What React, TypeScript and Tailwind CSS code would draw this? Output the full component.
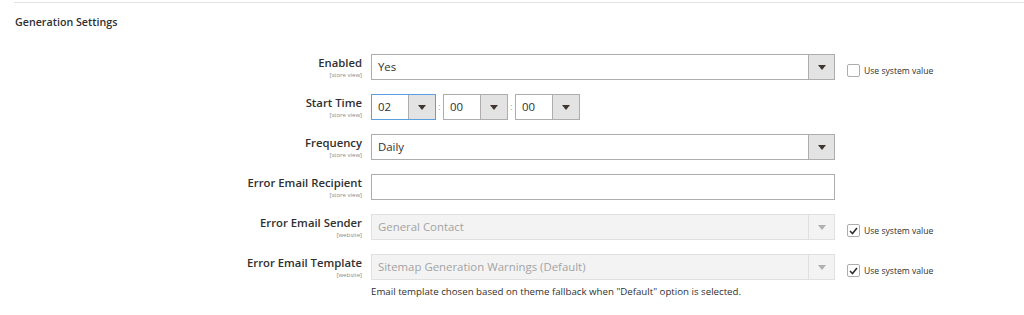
import React from "react";

const Arrow = ({ disabled }: { disabled?: boolean }) => (
  <svg width="8" height="5" viewBox="0 0 8 5">
    <path d="M0 0 L8 0 L4 5 Z" fill={disabled ? "#b0b0b0" : "#41362f"} />
  </svg>
);

const Check = ({ checked }: { checked?: boolean }) => (
  <div className="w-[13px] h-[13px] border border-[#adadad] rounded-[2px] bg-white flex items-center justify-center">
    {checked && (
      <svg width="9" height="8" viewBox="0 0 9 8">
        <path d="M1 4 L3.5 6.5 L8 1" stroke="#303030" strokeWidth="1.6" fill="none" />
      </svg>
    )}
  </div>
);

const Label = ({ title, scope }: { title: string; scope: string }) => (
  <div className="w-[362px] shrink-0 flex flex-col items-end pt-[1px]">
    <div className="text-[11.3px] leading-[15px] font-semibold text-[#303030]">{title}</div>
    <div className="text-[6px] leading-[8px] text-[#8a8a8a] mt-[1px]">{scope}</div>
  </div>
);

const Select = ({ value, disabled }: { value: string; disabled?: boolean }) => (
  <div
    className={`w-[464px] h-[26px] flex border ${
      disabled ? "border-[#e0e0e0] bg-[#f3f3f3]" : "border-[#adadad] bg-white"
    }`}
  >
    <div
      className={`flex-1 flex items-center pl-[6px] text-[11.4px] ${
        disabled ? "text-[#a3a3a3]" : "text-[#303030]"
      }`}
    >
      {value}
    </div>
    <div
      className={`w-[26px] flex items-center justify-center border-l ${
        disabled ? "border-[#e0e0e0] bg-[#f3f3f3]" : "border-[#adadad] bg-[#e3e3e3]"
      }`}
    >
      <Arrow disabled={disabled} />
    </div>
  </div>
);

const TimeSelect = ({ value, focused }: { value: string; focused?: boolean }) => (
  <div
    className={`w-[65px] h-[26px] flex border bg-white ${
      focused ? "border-[#5a9fe0]" : "border-[#adadad]"
    }`}
  >
    <div className="w-[36px] flex items-center pl-[6px] text-[11.4px] text-[#303030]">{value}</div>
    <div className="flex-1 flex items-center justify-center border-l border-[#adadad] bg-[#e3e3e3]">
      <Arrow />
    </div>
  </div>
);

const UseSystem = ({ checked }: { checked?: boolean }) => (
  <div className="flex items-center gap-[4px] ml-[12px] mt-[10px]">
    <Check checked={checked} />
    <span className="text-[8.6px] leading-[12px] text-[#303030]">Use system value</span>
  </div>
);

export default function App() {
  return (
    <div
      className="w-[1024px] h-[315px] bg-white overflow-hidden"
      style={{ fontFamily: '"Open Sans", "Liberation Sans", sans-serif' }}
    >
      <div className="ml-[14px] mt-[2px] border-t-[1.5px] border-[#e3e3e3]" />
      <div className="pl-[15px] pt-[12px] text-[10.7px] leading-[14px] font-semibold text-[#303030]">
        Generation Settings
      </div>
      <div className="mt-[25px] flex flex-col gap-[14px]">
        <div className="flex items-start">
          <Label title="Enabled" scope="[store view]" />
          <div className="ml-[9px] flex items-start">
            <Select value="Yes" />
            <UseSystem />
          </div>
        </div>
        <div className="flex items-start">
          <Label title="Start Time" scope="[store view]" />
          <div className="ml-[9px] flex items-center">
            <TimeSelect value="02" focused />
            <span className="w-[7px] text-center text-[9px] text-[#a0a0a0]">:</span>
            <TimeSelect value="00" />
            <span className="w-[7px] text-center text-[9px] text-[#a0a0a0]">:</span>
            <TimeSelect value="00" />
          </div>
        </div>
        <div className="flex items-start">
          <Label title="Frequency" scope="[store view]" />
          <div className="ml-[9px]">
            <Select value="Daily" />
          </div>
        </div>
        <div className="flex items-start">
          <Label title="Error Email Recipient" scope="[store view]" />
          <div className="ml-[9px] w-[464px] h-[26px] border border-[#adadad] bg-white" />
        </div>
        <div className="flex items-start">
          <Label title="Error Email Sender" scope="[website]" />
          <div className="ml-[9px] flex items-start">
            <Select value="General Contact" disabled />
            <UseSystem checked />
          </div>
        </div>
        <div className="flex items-start">
          <Label title="Error Email Template" scope="[website]" />
          <div className="ml-[9px] flex flex-col">
            <div className="flex items-start">
              <Select value="Sitemap Generation Warnings (Default)" disabled />
              <UseSystem checked />
            </div>
            <div className="mt-[5px] text-[9.7px] leading-[13px] text-[#303030]">
              Email template chosen based on theme fallback when "Default" option is selected.
            </div>
          </div>
        </div>
      </div>
    </div>
  );
}
